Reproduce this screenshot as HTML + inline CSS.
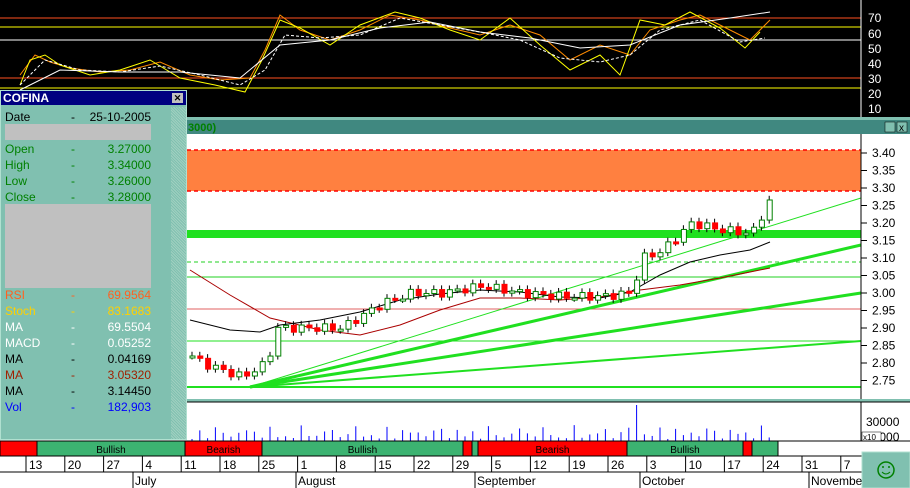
<!DOCTYPE html><html><head><meta charset="utf-8"><style>
body{margin:0;width:910px;height:488px;overflow:hidden;background:#fff;font-family:"Liberation Sans",sans-serif;position:relative}
.abs{position:absolute}
.pn{font-size:12px;position:absolute;left:4px;width:146px;height:15px}
.pn span{position:absolute}
</style></head><body>
<svg class="abs" style="left:0;top:0" width="910" height="488" id="s">
<rect x="0" y="0" width="910" height="118" fill="#000"/>
<line x1="0" y1="18" x2="861" y2="18" stroke="#ff5020"/>
<line x1="0" y1="27" x2="861" y2="27" stroke="#ffff00"/>
<line x1="0" y1="40" x2="861" y2="40" stroke="#fff"/>
<line x1="0" y1="78" x2="861" y2="78" stroke="#ff5020"/>
<line x1="0" y1="88" x2="861" y2="88" stroke="#ffff00"/>
<line x1="861" y1="0" x2="861" y2="118" stroke="#fff"/>
<polyline fill="none" stroke="#ff8c00" points="20,75 35,55 50,62 70,68 100,72 130,70 160,62 190,75 220,80 250,78 265,50 280,15 300,30 330,40 360,30 390,15 420,20 450,28 480,35 510,25 540,35 570,60 600,45 630,55 650,30 680,20 700,15 730,30 750,40 770,20"/>
<polyline fill="none" stroke="#ffff00" points="20,85 30,60 45,55 60,65 90,75 120,70 150,60 180,78 215,85 245,92 262,60 280,20 300,28 330,45 360,25 395,12 420,18 450,30 480,40 510,18 540,45 570,70 600,55 620,75 640,20 665,25 690,12 720,28 745,48 760,32"/>
<polyline fill="none" stroke="#fff" stroke-dasharray="3,2" points="20,85 45,60 80,70 120,72 160,66 200,75 240,85 265,70 285,35 320,38 360,35 400,18 440,25 480,32 520,40 560,58 600,62 630,55 660,30 700,20 740,42 765,38"/>
<polyline fill="none" stroke="#fff" points="20,90 60,70 120,72 180,72 240,78 280,45 330,40 380,28 430,22 480,32 530,38 580,48 630,45 680,25 730,18 770,12"/>
<g fill="#fff" font-size="12">
<text x="868" y="22">70</text><text x="868" y="38">60</text><text x="868" y="53">50</text><text x="868" y="68">40</text><text x="868" y="83">30</text><text x="868" y="98">20</text><text x="868" y="113">10</text></g>
<rect x="0" y="117" width="910" height="3" fill="#80c0b0"/>
<rect x="187" y="120" width="723" height="14" fill="#408880"/>
<text x="188" y="131" fill="#008000" font-size="11" font-weight="bold">3000)</text>
<rect x="885" y="122" width="10" height="10" fill="#80c0b0" stroke="#000" stroke-width=".5"/><rect x="897" y="122" width="10" height="10" fill="#80c0b0" stroke="#000" stroke-width=".5"/>
<text x="899" y="131" font-size="10">x</text>
<rect x="187" y="134" width="674" height="266" fill="#fff"/>
<rect x="187" y="150" width="674" height="41" fill="#ff8040"/>
<line x1="187" y1="150" x2="861" y2="150" stroke="#f00" stroke-dasharray="4,3" stroke-width="1.5"/>
<line x1="187" y1="191" x2="861" y2="191" stroke="#f00" stroke-dasharray="4,3" stroke-width="1.5"/>
<rect x="187" y="230" width="674" height="8" fill="#20e020"/>
<line x1="187" y1="262" x2="861" y2="262" stroke="#20d020" stroke-dasharray="4,3"/>
<line x1="187" y1="277" x2="861" y2="277" stroke="#20d020"/>
<line x1="187" y1="309" x2="861" y2="309" stroke="#e06060"/>
<line x1="187" y1="341" x2="861" y2="341" stroke="#20e020"/>
<line x1="187" y1="387" x2="861" y2="387" stroke="#20e020" stroke-width="2"/>
<g stroke="#20e020" stroke-width="3"><line x1="250" y1="387" x2="861" y2="245"/><line x1="250" y1="387" x2="861" y2="293"/><line x1="250" y1="387" x2="861" y2="341" stroke-width="2"/></g>
<line x1="250" y1="387" x2="861" y2="198" stroke="#20e020"/>
<polyline fill="none" stroke="#a00" points="190,270 230,295 270,318 320,330 360,335 400,325 440,310 480,298 520,298 560,300 600,297 640,290 680,285 720,278 750,272 770,268"/>
<polyline fill="none" stroke="#000" points="190,320 230,330 260,332 280,325 320,320 360,312 400,300 440,294 480,290 520,292 560,297 600,298 630,292 660,275 690,262 720,255 750,250 770,242"/>
<g id="cd"></g>
<line x1="861" y1="134" x2="861" y2="400" stroke="#000"/>
<g font-size="12" fill="#000" id="pl"></g>
<rect x="187" y="399" width="723" height="3" fill="#80c0b0"/>
<line x1="187" y1="402" x2="910" y2="402" stroke="#000"/>
<g id="vol" stroke="#0000ff"></g>
<line x1="861" y1="402" x2="861" y2="441" stroke="#000"/>
<text x="866" y="426" font-size="12">30000</text><text x="866" y="441" font-size="12">30000</text>
<rect x="862" y="432" width="19" height="9" fill="#fff" stroke="#000" stroke-width=".5"/><text x="863" y="440" font-size="8">x10</text>
<g id="bb" font-size="10" text-anchor="middle"></g>
<line x1="0" y1="441" x2="910" y2="441" stroke="#000"/>
<line x1="0" y1="456" x2="862" y2="456" stroke="#000"/>
<line x1="0" y1="472" x2="862" y2="472" stroke="#000"/>
<g id="dt" font-size="12"></g>
<rect x="862" y="452" width="48" height="36" fill="#80c0b0" stroke="#b0e0d0"/>
<circle cx="886" cy="470" r="8" fill="none" stroke="#008000" stroke-width="1.5"/><circle cx="883" cy="467" r="1" fill="#008000"/><circle cx="889" cy="467" r="1" fill="#008000"/><path d="M882 472 Q886 476 890 472" fill="none" stroke="#008000"/>
</svg>
<div class="abs" style="left:0;top:90px;width:187px;height:350px;background:#80c0b0;border:1px solid #b0e0d0;box-sizing:border-box">
<div style="background:#000080;color:#fff;font-weight:bold;font-size:12px;height:14px;line-height:14px;padding-left:2px">COFINA<span style="position:absolute;right:3px;top:2px;width:11px;height:10px;background:#c0c0c0;color:#000;font-size:9px;line-height:10px;text-align:center">✕</span></div>
<div class="abs" style="left:170px;top:16px;width:15px;height:332px;background:repeating-linear-gradient(45deg,#a0d0c0 0 1px,#80c0b0 1px 2px)"></div>
<div class="abs" style="left:4px;top:33px;width:146px;height:16px;background:#c0c0c0"></div>
<div class="abs" style="left:4px;top:113px;width:146px;height:84px;background:#c0c0c0"></div>
<div class="pn" style="top:19px"><span style="left:0">Date</span><span style="left:66px">-</span><span style="right:0">25-10-2005</span></div>
<div class="pn" style="top:51px;color:#008000"><span>Open</span><span style="left:66px">-</span><span style="right:0">3.27000</span></div>
<div class="pn" style="top:67px;color:#008000"><span>High</span><span style="left:66px">-</span><span style="right:0">3.34000</span></div>
<div class="pn" style="top:83px;color:#008000"><span>Low</span><span style="left:66px">-</span><span style="right:0">3.26000</span></div>
<div class="pn" style="top:99px;color:#008000"><span>Close</span><span style="left:66px">-</span><span style="right:0">3.28000</span></div>
<div class="pn" style="top:197px;color:#ff6020"><span>RSI</span><span style="left:66px">-</span><span style="right:0">69.9564</span></div>
<div class="pn" style="top:213px;color:#ffd000"><span>Stoch</span><span style="left:66px">-</span><span style="right:0">83.1683</span></div>
<div class="pn" style="top:229px;color:#fff"><span>MA</span><span style="left:66px">-</span><span style="right:0">69.5504</span></div>
<div class="pn" style="top:245px;color:#fff"><span>MACD</span><span style="left:66px">-</span><span style="right:0">0.05252</span></div>
<div class="pn" style="top:261px;color:#000"><span>MA</span><span style="left:66px">-</span><span style="right:0">0.04169</span></div>
<div class="pn" style="top:277px;color:#a02000"><span>MA</span><span style="left:66px">-</span><span style="right:0">3.05320</span></div>
<div class="pn" style="top:293px;color:#000"><span>MA</span><span style="left:66px">-</span><span style="right:0">3.14450</span></div>
<div class="pn" style="top:309px;color:#0000ff"><span>Vol</span><span style="left:66px">-</span><span style="right:0">182,903</span></div>
</div>
<script>
var N="http://www.w3.org/2000/svg";function el(p,t,a,tx){var e=document.createElementNS(N,t);for(var k in a)e.setAttribute(k,a[k]);if(tx)e.textContent=tx;document.getElementById(p).appendChild(e);return e}
var pl=["3.40","3.35","3.30","3.25","3.20","3.15","3.10","3.05","3.00","2.95","2.90","2.85","2.80","2.75"];
pl.forEach(function(t,i){var y=153+i*17.5;el("pl","text",{x:872,y:y+4},t);el("pl","line",{x1:861,y1:y,x2:867,y2:y,stroke:"#000"})});
var K=[[190,2.82],[200,2.80],[240,2.76],[265,2.80],[275,2.90],[300,2.90],[340,2.90],[380,2.97],[410,3.00],[440,3.00],[480,3.02],[520,3.00],[560,2.99],[600,2.99],[630,3.00],[640,3.10],[660,3.12],[690,3.20],[720,3.18],[750,3.17],[765,3.25],[772,3.28]];
function pr(x){for(var i=1;i<K.length;i++)if(x<=K[i][0]){var a=K[i-1],b=K[i];return a[1]+(b[1]-a[1])*(x-a[0])/(b[0]-a[0])}return 3.28}
function Y(p){return 153+(3.40-p)*350}
var prev=pr(190),i=0;
for(var x=190;x<=772;x+=7.8,i++){var c=pr(x)+Math.sin(i*2.3)*0.012,o=prev;var hi=Math.max(o,c)+0.012,lo=Math.min(o,c)-0.01;
el("cd","line",{x1:x+2,y1:Y(hi),x2:x+2,y2:Y(lo),stroke:"#000"});
var up=c>=o;el("cd","rect",{x:x,y:Y(Math.max(o,c)),width:5,height:Math.max(2,Math.abs(Y(o)-Y(c))),fill:up?"#fff":"#f00",stroke:up?"#008000":"#f00"});prev=c;
var v=x>630&&x<640?36:2+Math.abs(Math.sin(i*1.7)*Math.cos(i*0.9))*14;el("vol","line",{x1:x+2,y1:441,x2:x+2,y2:441-v})}
var B=[[0,37,"#f00",""],[37,185,"#3cb371","Bullish"],[185,262,"#f00","Bearish"],[262,463,"#3cb371","Bullish"],[463,472,"#f00",""],[472,478,"#3cb371",""],[478,627,"#f00","Bearish"],[627,743,"#3cb371","Bullish"],[743,752,"#f00",""],[752,778,"#3cb371",""]];
B.forEach(function(b){el("bb","rect",{x:b[0],y:441,width:b[1]-b[0],height:15,fill:b[2],stroke:"#000"});if(b[3])el("bb","text",{x:(b[0]+b[1])/2,y:453},b[3])});
var D=["13","20","27","4","11","18","25","1","8","15","22","29","5","12","19","26","3","10","17","24","31","7"];
D.forEach(function(d,j){var x=26+j*38.8;el("dt","line",{x1:x,y1:456,x2:x,y2:472,stroke:"#000"});el("dt","text",{x:x+3,y:469},d)});
[["July",133],["August",296],["September",475],["October",640],["November",809]].forEach(function(m){el("dt","line",{x1:m[1],y1:472,x2:m[1],y2:488,stroke:"#000"});el("dt","text",{x:m[1]+2,y:485},m[0])});
</script>
</body></html>
